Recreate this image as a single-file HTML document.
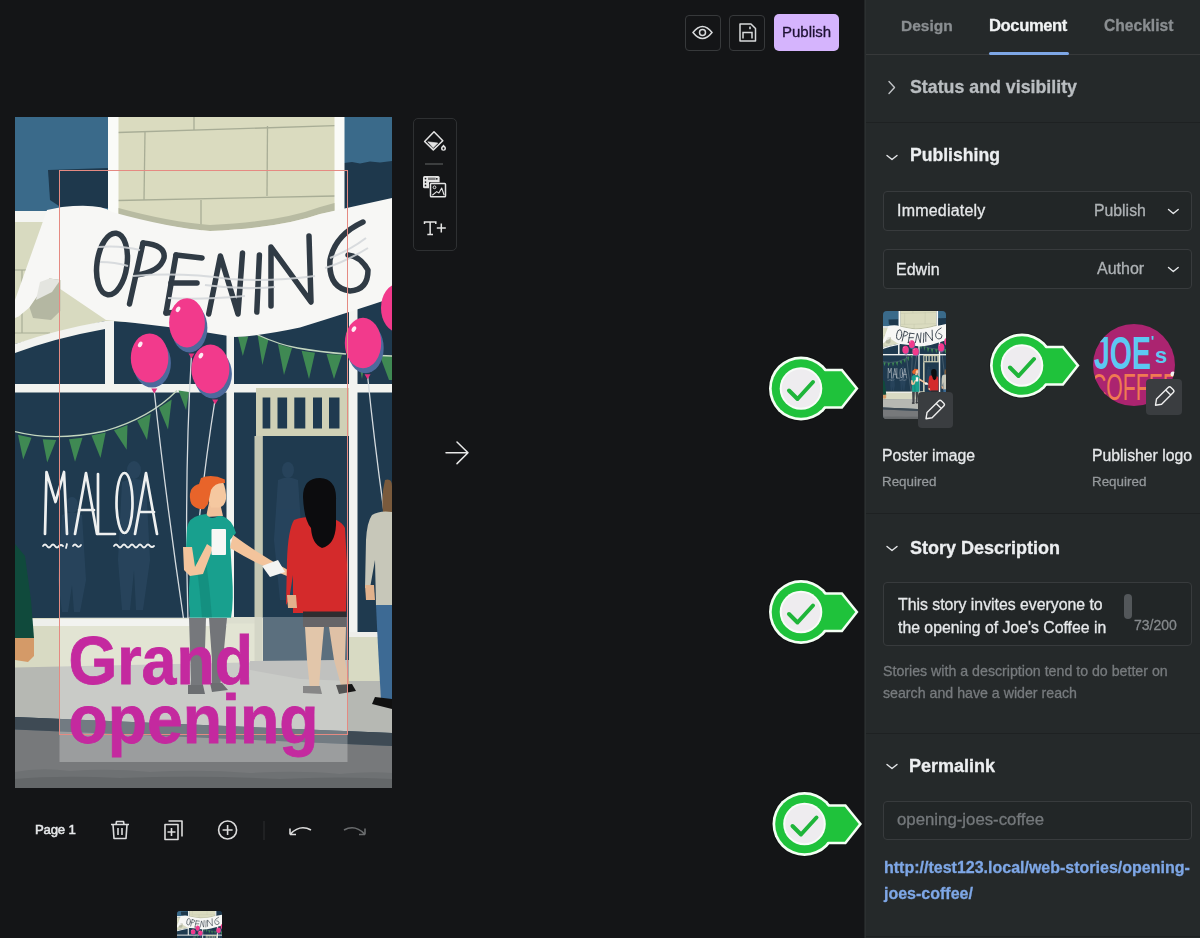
<!DOCTYPE html>
<html><head><meta charset="utf-8">
<style>
*{box-sizing:border-box;margin:0;padding:0}
html,body{width:1200px;height:938px;overflow:hidden;background:#141517;font-family:"Liberation Sans",sans-serif;}
.abs{position:absolute}
#panel{position:absolute;left:865px;top:0;width:335px;height:938px;background:#25292a;border-left:1px solid #2c3031;box-shadow:-1px 0 0 #222526}
.t{position:absolute;white-space:nowrap;line-height:1;will-change:transform;-webkit-text-stroke:0.3px currentColor}
.div{position:absolute;left:0;width:335px;height:1px;background:#1e2122}
.sel{position:absolute;left:17px;width:309px;border:1px solid #383b3d;border-radius:4px;background:#222627}
.btn{position:absolute;border:1px solid #37393b;border-radius:4px}
.edit{position:absolute;width:36px;height:36px;background:#3a3d40;border-radius:4px}
</style></head><body>

<!-- top buttons -->
<div class="btn" style="left:685px;top:15px;width:36px;height:36px"></div>
<div class="btn" style="left:729px;top:15px;width:36px;height:36px"></div>
<div class="abs" style="left:774px;top:14px;width:65px;height:37px;background:#d5b4fd;border-radius:5px"></div>
<div class="t" style="left:782px;top:24px;font-size:15px;color:#1e1233">Publish</div>

<!-- canvas -->
<!--ILLUS--><svg style="position:absolute;left:15px;top:117px" width="377" height="671" viewBox="15 117 377 671">
<g id="illbg">
<!-- base dark window -->
<rect x="15" y="117" width="377" height="671" fill="#1f3a4f"/>
<!-- sky -->
<rect x="15" y="117" width="93" height="95" fill="#3a6a8a"/>
<rect x="344" y="117" width="48" height="47" fill="#3a6a8a"/>
<path d="M48 170 L108 168 L108 208 L62 208 L50 200 Z" fill="#1e384c"/>
<path d="M344 163 L352 162 L360 163.5 L370 161.5 L380 162.5 L392 161 L392 203 L344 203 Z" fill="#1e384c"/>
<!-- cream wall -->
<rect x="118" y="117" width="217" height="120" fill="#dadbbf"/>
<g stroke="#a8ad96" stroke-width="1.3" fill="none">
<path d="M118 132.5 L335 125.7"/><path d="M118 200.5 L335 196"/>
<path d="M145 132 L144 200"/><path d="M267.5 126 L267 196"/><path d="M194 117 L194 130"/><path d="M201 200 L201 235"/>
</g>
<!-- pillars -->
<rect x="108" y="117" width="10.5" height="100" fill="#fafbf8"/>
<rect x="334.5" y="117" width="10" height="100" fill="#fafbf8"/>
<!-- left wall under banner -->
<path d="M15 222 L135 222 L135 322 L105 321 L15 344Z" fill="#d8dac0"/>
<g stroke="#a8ad96" stroke-width="1.2" fill="none"><path d="M15 270 L40 270"/><path d="M15 333 L50 333"/><path d="M22 270 L22 333"/></g>
<rect x="15" y="211" width="93" height="11" fill="#f4f5f2"/>
<!-- white arc frame over windows -->
<path d="M15 344 Q55 330 105 321 L114 321 L114 329 L105 329 Q55 338 15 353 Z" fill="#f2f3f0"/>
<!-- mullions / beams -->
<rect x="105" y="322" width="9" height="66" fill="#f2f3f0"/>
<rect x="226.5" y="318" width="7.5" height="306" fill="#f2f3f0"/>
<rect x="349" y="300" width="8.5" height="337" fill="#f2f3f0"/>
<rect x="15" y="384" width="377" height="8.5" fill="#f2f3f0"/>
<!-- bunting strings & flags -->
<g fill="#3f8953">
<path d="M18 434.7 L31.5 437.7 L23.2 459.5Z"/><path d="M42.7 439.2 L56.2 440 L47.2 462.5Z"/><path d="M69 439.2 L82.5 437.7 L75 461.7Z"/><path d="M91.5 435.5 L105.7 432.5 L100.5 458Z"/><path d="M114 430.2 L127.5 425 L126.7 449.7Z"/><path d="M137.2 420.5 L150.7 413.7 L147 440Z"/><path d="M159 407.7 L171.7 399.5 L168 429.5Z"/><path d="M178.5 390.5 L189 392 L186 410Z"/>
<path d="M238 336.6 L248.2 336.6 L242.8 356Z"/><path d="M257.7 335.2 L268.5 339.3 L262.4 365Z"/><path d="M278 344 L292 348 L284 375Z"/><path d="M301.6 350.8 L315 352.8 L309 379Z"/><path d="M326.5 354 L342 354.8 L334 379Z"/>
<path d="M357 355 L366 355 L362 379Z"/><path d="M380 356 L392 356 L392 380 L389 380Z"/>
</g>
<g stroke="#c3d6bf" stroke-width="1.3" fill="none">
<path d="M15 431.7 Q55 442 105 431 Q150 418 177 390.5"/>
<path d="M256.8 334.5 Q280 345 297.5 348 Q320 352 346 354"/>
<path d="M357 354.5 L392 356"/>
</g>
<!-- door railing -->
<rect x="256" y="388" width="93" height="48" fill="#cfd0b6"/>
<g fill="#1f3a50"><rect x="262.6" y="397.5" width="7.7" height="31"/><rect x="277.5" y="397.5" width="9.6" height="31"/><rect x="294.3" y="397.5" width="11" height="31"/><rect x="313" y="397.5" width="9" height="31"/><rect x="329" y="397.5" width="10.5" height="31"/></g>
<rect x="256" y="436" width="6.6" height="224" fill="#cfd0b6"/>
<!-- banner -->
<path d="M118.5 208 Q170 222 210 225 Q280 222 320 207 L334.5 203 L334.5 211 L320 214 Q280 228 210 231 Q170 228 118.5 215Z" fill="#b8bba2"/>
<path d="M47 210 L62 207 Q100 203 112 212 Q170 228 210 231 Q280 228 320 214 Q360 205 392 198 L392 298 Q350 312 300 327.5 Q260 336 235 337 Q170 326 106 320 L60.3 289 L60.3 280 L49.4 278.4 L29.5 307.4 L18.6 316.4 L15 318 L15 300 Z" fill="#f7f7f5"/>
<path d="M49.4 278.4 L60.3 280 L60.3 311 L51 320 L33 318 L29.5 307.4Z" fill="#b4b7a2"/><path d="M40 282 L49.4 278.4 L60.3 280 L52 292 L36 300Z" fill="#e4e5e0"/>
<g stroke="#303b45" stroke-width="5.5" fill="none" stroke-linecap="round" stroke-linejoin="round">
<ellipse cx="112" cy="264" rx="15" ry="31" transform="rotate(8 112 264)"/>
<path d="M143 243 L129.5 304"/><path d="M143 243 Q166 245 164 258 Q160 272 136 275"/>
<path d="M176 255 L166 313"/><path d="M176 255 L202 258"/><path d="M171 283 L197 283"/><path d="M166 313 L194 311"/>
<path d="M208.7 314 L220.4 256 L238 314 L242.5 253"/>
<path d="M259.4 255 L256.8 312"/>
<path d="M271 306 L271 247 L311 302 L309 236"/>
<path d="M363 222 Q335 235 330 260 Q328 288 350 291 Q368 290 368 270 Q360 256 348 255"/>
</g>
<g stroke="#d3d7da" stroke-width="2" fill="none" opacity="0.85">
<path d="M98 247 Q120 245 140 250"/><path d="M100 262 Q115 262 128 266"/>
<path d="M133 276 Q180 272 230 279 Q270 282 315 276"/>
<path d="M205 285 Q240 290 275 287"/>
<path d="M168 298 Q200 300 245 296"/>
<path d="M325 268 Q345 262 368 248"/><path d="M330 258 Q350 250 366 238"/>
</g>
<!-- balloon strings -->
<g stroke="#d5dbdf" stroke-width="1.3" fill="none">
<path d="M154 389 Q166 500 184 622"/><path d="M191.5 354 Q184 480 188 622"/><path d="M215 400 Q199 500 190 622"/><path d="M367.5 375 Q374 440 384 512"/>
</g>
<!-- balloons -->
<g>
<ellipse cx="189.5" cy="327.8" rx="17.9" ry="24.6" fill="#4d6a9c"/><ellipse cx="187" cy="322.8" rx="17.9" ry="24.6" fill="#f23a8c"/><path d="M188.475 353.40000000000003 L194.475 353.40000000000003 L191.475 358.40000000000003Z" fill="#e0307e"/><ellipse cx="178.05" cy="309.27" rx="2" ry="3" transform="rotate(30 178.05 309.27)" fill="#ffffff" opacity="0.9"/>
<ellipse cx="152.1" cy="363" rx="18.8" ry="24.6" fill="#4d6a9c"/><ellipse cx="149.6" cy="358" rx="18.8" ry="24.6" fill="#f23a8c"/><path d="M151.29999999999998 388.6 L157.29999999999998 388.6 L154.29999999999998 393.6Z" fill="#e0307e"/><ellipse cx="140.2" cy="344.47" rx="2" ry="3" transform="rotate(30 140.2 344.47)" fill="#ffffff" opacity="0.9"/>
<ellipse cx="212.9" cy="374" rx="19" ry="24.4" fill="#4d6a9c"/><ellipse cx="210.4" cy="369" rx="19" ry="24.4" fill="#f23a8c"/><path d="M212.15 399.4 L218.15 399.4 L215.15 404.4Z" fill="#e0307e"/><ellipse cx="200.9" cy="355.58" rx="2" ry="3" transform="rotate(30 200.9 355.58)" fill="#ffffff" opacity="0.9"/>
<ellipse cx="365.5" cy="348" rx="18.2" ry="25.3" fill="#4d6a9c"/><ellipse cx="363" cy="343" rx="18.2" ry="25.3" fill="#f23a8c"/><path d="M364.55 374.3 L370.55 374.3 L367.55 379.3Z" fill="#e0307e"/><ellipse cx="353.9" cy="329.085" rx="2" ry="3" transform="rotate(30 353.9 329.085)" fill="#ffffff" opacity="0.9"/>
<ellipse cx="398" cy="308" rx="17" ry="24" fill="#f23a8c"/>
</g>
<!-- ghosts -->
<g fill="#2a4760" opacity="0.75">
<ellipse cx="134" cy="470" rx="7" ry="9"/><path d="M122 482 Q134 476 146 482 L150 560 L143 610 L136 610 L134 570 L130 610 L122 610 L118 560Z"/>
<ellipse cx="72" cy="505" rx="6" ry="8"/><path d="M62 515 Q72 510 82 515 L86 580 L80 612 L74 612 L72 585 L68 612 L62 612 L58 580Z"/>
<ellipse cx="288" cy="470" rx="6" ry="8"/><path d="M278 480 Q288 475 298 480 L302 540 L296 600 L280 600 L274 540Z"/>
</g>
<!-- MALOA -->
<g stroke="#eef0f0" stroke-width="2.7" fill="none" stroke-linecap="round" stroke-linejoin="round">
<path d="M45 534 L46.5 472 L55.5 502 L64 472 L67 534"/>
<path d="M75 534 L86 473 L97 534 M79 510 L94 510"/>
<path d="M98 474 L98 534 L115 534"/>
<ellipse cx="124.5" cy="503" rx="8" ry="30"/>
<path d="M135 534 L146 473 L157 534 M139 512 L154 512"/>
<path d="M43 546 q2 -3 4 0 q2 3 4 0 q2 -3 4 0 q2 3 4 0 q2 -2 4 0 M66 548 l1 -4 M73 546 q2 -3 4 0 q2 2 4 -1 M114 546 q2 -3 4 0 q2 3 4 0 q2 -3 4 0 q2 3 4 0 q2 -3 4 0 q2 3 4 0 q2 -3 4 0 q2 3 4 0 q2 -3 4 0 q2 2 4 0" stroke-width="1.8"/>
</g>
<!-- window bottom sill and base wall -->
<rect x="15" y="618" width="248" height="50" fill="#d8dac3"/>
<rect x="15" y="619" width="212" height="7" fill="#eeefeb"/>
<path d="M226 617 L255 617 L255 623.5 L226 623.5Z" fill="#d0d2bd"/>
<!-- door -->
<rect x="254.5" y="436" width="8" height="226" fill="#c5c7b3"/>
<rect x="349" y="632" width="43" height="49" fill="#d8dac3"/>
<rect x="349" y="632" width="32" height="5" fill="#eeeeea"/>
<!-- left person green -->
<path d="M15 544 L25 556 L31 600 L34 638 L15 640 Z" fill="#104a3c"/>
<path d="M15 638 L34 638 L34 656 L28 662 L15 660Z" fill="#d49a68"/>
<!-- sidewalk -->
<path d="M15 667.5 L263 662 L349 660 L349 681 L392 681 L392 733 L15 717 Z" fill="#b6b8b3"/>
<path d="M250 661 L349 660 L349 681 L300 679 L250 670Z" fill="#a9aba8"/>
<path d="M15 717 L392 733 L392 746 L15 729.5 Z" fill="#3e4a54"/>
<path d="M15 729.5 L392 746 L392 788 L15 788 Z" fill="#77797b"/>
<path d="M15 772 Q40 767 70 771 Q110 768 150 772 Q200 769 250 773 Q300 770 340 774 Q370 771 392 773 L392 788 L15 788Z" fill="#6e7173"/>
<path d="M15 779 Q60 775 120 778 Q200 775 280 779 Q340 776 392 779 L392 788 L15 788Z" fill="#646769"/>
<!-- woman 1 -->
<path d="M189 618 L206 618 L204 680 L201 692 L190 692 L191 680 Z" fill="#44474c"/>
<path d="M209 618 L227 618 L223 660 L220 688 L212 690 L212 660 Z" fill="#404348"/>
<path d="M188 685 L203 685 L205 694 L188 694Z M210 683 L222 683 L228 690 L212 692Z" fill="#36393d"/>
<path d="M209 503 L220 503 L223 516 L206 517Z" fill="#f0c09a"/>
<path d="M187 528 Q188 518 200 515 L206 514 Q211 521 218 516 L222 516 Q232 519 236 533 L230 540 L232 575 Q234 600 231 618 L190 618 Q187 590 192 555 L186 548 Z" fill="#18a08e"/>
<path d="M196 560 Q200 590 202 618 L212 618 Q210 590 206 560Z" fill="#128474" opacity="0.55"/>
<path d="M233 535 Q260 555 288 570 L287 576 Q258 565 230 548Z" fill="#f3c49c"/>
<path d="M183 547 L192 547 L195 567 L207 544 L213 548 L203 574 L190 576 L184 570Z" fill="#f3c49c"/>
<rect x="211.5" y="529" width="14.5" height="26" rx="1" fill="#f7f7f5"/>
<path d="M262 566 L278 560 L285 572 L270 577Z" fill="#f4f4f2"/>
<path d="M208 486 Q213 480 223 482 Q226.5 490 226 499 Q225 506 219 507.5 L211 507.5 Q207 500 208 486Z" fill="#f5c8a0"/>
<path d="M201 478 Q212 473.5 224.8 479.5 L225 483 Q215 482 211 490 L208 504 L204 509 Q196 510 191.5 504 Q188.5 497 191 490 Q194 485 199 484 Z" fill="#e8642a"/>
<!-- woman 2 -->
<path d="M294 520 Q304 516 322 517 Q340 518 345 528 L347 565 L346 613 L293 613 L293 575 L289 600 L286 605 L287 560 Q288 530 294 520Z" fill="#d42a2b"/>
<path d="M287 595 L296 595 L297 608 L288 608Z" fill="#e2b28c"/>
<path d="M303 497 Q303 478 320 478 Q337 479 336 500 L336 525 Q335 545 322 548 Q312 544 311 528 Q304 520 303 497Z" fill="#0c0c0e"/>
<rect x="303" y="611.5" width="43" height="15.5" fill="#2e2d30"/>
<path d="M305 627 L324 627 L321 660 L319 688 L310 689 L307 660 Z" fill="#d8b18b"/>
<path d="M329 627 L346 627 L345 660 L350 686 L342 689 L334 660 Z" fill="#d3ab86"/>
<path d="M303 686 L320 686 L322 694 L303 693Z" fill="#5b5b5b"/><path d="M336 685 L352 684 L356 691 L339 694Z" fill="#151515"/>
<!-- man -->
<path d="M385 480 Q392 478 392 486 L392 512 L383 512 Q381 495 385 480Z" fill="#7a5a3c"/>
<path d="M372 515 Q380 510 392 512 L392 606 L376 606 L375 560 L370 588 L365 588 L366 540 Q367 522 372 515Z" fill="#c7c7b9"/>
<path d="M365 585 L374 585 L375 600 L366 600Z" fill="#e2b28c"/>
<path d="M376 605 L392 605 L392 700 L381 700 Q378 650 376 605Z" fill="#3d6a94"/>
<path d="M375 697 L392 699 L392 709 L372 704Z" fill="#101010"/>
</g>
<!-- text overlay -->
<rect x="59.5" y="617" width="288" height="145" fill="#ffffff" opacity="0.27"/>
<rect x="59.5" y="170.5" width="288" height="564" fill="none" stroke="#e58a82" stroke-width="1"/>
<text x="68.5" y="683.5" font-family="Liberation Sans" font-weight="700" font-size="68.5" fill="#c4299f" stroke="#c4299f" stroke-width="0.8" textLength="184.5" lengthAdjust="spacingAndGlyphs">Grand</text>
<text x="68.5" y="742.5" font-family="Liberation Sans" font-weight="700" font-size="68" fill="#c4299f" stroke="#c4299f" stroke-width="0.8" textLength="250" lengthAdjust="spacingAndGlyphs">opening</text>
</svg>
<!--/ILLUS-->

<!-- page toolbar text -->
<div class="t" style="left:35px;top:823px;font-size:13.2px;font-weight:400;color:#e6e8ea;letter-spacing:-0.2px;-webkit-text-stroke:0.5px #e6e8ea">Page 1</div>
<!-- bottom thumbnail -->
<div class="abs" style="left:177px;top:911px;width:45px;height:40px;border-radius:3px;overflow:hidden"><svg style="position:absolute;left:0;top:-5px" width="45" height="72" viewBox="15 117 377 671" preserveAspectRatio="none"><use href="#illbg"/></svg></div>
<!-- floating toolbar -->
<div class="abs" style="left:413px;top:118px;width:44px;height:133px;border:1px solid #2e3032;border-radius:5px"></div>

<!-- right panel -->
<div id="panel">
  <div class="div" style="top:54px;background:#37393a"></div>
  <div class="t" style="left:35px;top:18px;font-size:15.5px;font-weight:700;color:#8a8e91">Design</div>
  <div class="t" style="left:123px;top:17.5px;font-size:16.6px;letter-spacing:-0.4px;font-weight:700;color:#f1f3f4">Document</div>
  <div class="t" style="left:238px;top:18px;font-size:15.6px;font-weight:700;color:#8a8e91">Checklist</div>
  <div class="abs" style="left:123px;top:52px;width:80px;height:3px;background:#7ea7e6;border-radius:2px"></div>

  <div class="t" style="left:44px;top:79px;font-size:17.8px;font-weight:700;color:#b9bdc0">Status and visibility</div>
  <div class="div" style="top:122px"></div>

  <div class="t" style="left:43.5px;top:147px;font-size:17.6px;font-weight:700;color:#eceef0">Publishing</div>
  <div class="sel" style="top:191px;height:40px"></div>
  <div class="t" style="left:31px;top:203px;font-size:16px;letter-spacing:0.2px;color:#e6e8ea">Immediately</div>
  <div class="t" style="left:228px;top:203px;font-size:15.8px;color:#aeb2b5">Publish</div>
  <div class="sel" style="top:249px;height:40px"></div>
  <div class="t" style="left:30px;top:262px;font-size:16px;color:#e6e8ea">Edwin</div>
  <div class="t" style="left:231px;top:261px;font-size:16px;color:#aeb2b5">Author</div>


  <div class="abs" style="left:17px;top:311px;width:63px;height:108px;border-radius:4px;overflow:hidden"><svg width="63" height="108" viewBox="15 117 377 671" preserveAspectRatio="none"><use href="#illbg"/></svg></div>
  <div class="edit" style="left:52px;top:392px;width:35px;height:36px"></div>
  <div class="abs" style="left:227px;top:324px;width:82px;height:82px;border-radius:50%;overflow:hidden;background:#ab2470">
    <svg width="82" height="82" viewBox="0 0 82 82">
      <text x="1" y="45" font-family="Liberation Sans" font-weight="700" font-size="47" fill="#5cc8f2" textLength="57" lengthAdjust="spacingAndGlyphs">JOE</text>
      <text x="58" y="22" font-family="Liberation Sans" font-weight="700" font-size="14" fill="#5cc8f2">'</text>
      <text x="62" y="39" font-family="Liberation Sans" font-weight="700" font-size="22" fill="#5cc8f2">s</text>
      <text x="-2" y="76" font-family="Liberation Sans" font-weight="400" font-size="36" fill="#f07a52" textLength="86" lengthAdjust="spacingAndGlyphs">COFFEE</text>
      <circle cx="80" cy="50" r="2.5" fill="#f2f2f2"/><circle cx="79" cy="58" r="2" fill="#f2f2f2"/>
    </svg>
  </div>
  <div class="edit" style="left:280px;top:379px;width:36px;height:35.5px"></div>
  <div class="t" style="left:16px;top:448px;font-size:15.8px;color:#e6e8ea">Poster image</div>
  <div class="t" style="left:16px;top:475px;font-size:13.4px;color:#94989b">Required</div>
  <div class="t" style="left:225.5px;top:448px;font-size:15.8px;color:#e6e8ea">Publisher logo</div>
  <div class="t" style="left:225.5px;top:475px;font-size:13.4px;color:#94989b">Required</div>
  <div class="div" style="top:513px"></div>

  <div class="t" style="left:44px;top:538.5px;font-size:18px;font-weight:700;color:#eceef0">Story Description</div>
  <div class="sel" style="top:582px;height:64px"></div>
  <div class="t" style="left:31.5px;font-size:15.8px;line-height:22.5px;color:#e6e8ea;top:594px">This story invites everyone to<br>the opening of Joe's Coffee in</div>
  <div class="abs" style="left:258px;top:594px;width:7.5px;height:25px;background:#53575a;border-radius:4px"></div>
  <div class="t" style="left:268px;top:618px;font-size:14px;color:#85898c">73/200</div>
  <div class="t" style="left:17px;top:660px;font-size:14.2px;line-height:22.4px;color:#777b7e">Stories with a description tend to do better on<br>search and have a wider reach</div>
  <div class="div" style="top:733px"></div>

  <div class="t" style="left:43px;top:757px;font-size:18px;font-weight:700;color:#eceef0">Permalink</div>
  <div class="sel" style="top:801px;height:39px"></div>
  <div class="t" style="left:30.5px;top:812px;font-size:16.8px;color:#74787b">opening-joes-coffee</div>
  <div class="t" style="left:18px;top:860px;font-size:16px;font-weight:700;line-height:26px;color:#7ea7e6;top:855px">http://test123.local/web-stories/opening-<br>joes-coffee/</div>
  <div class="div" style="top:936px"></div>
</div>

<!--OVER--><svg style="position:absolute;left:0;top:0" width="1200" height="938" viewBox="0 0 1200 938">
<defs>
<g id="badge">
<circle r="33" fill="#0a0a0a" opacity="0.35"/>
<circle r="32" fill="#f4fff4"/>
<path d="M18 -19.8 L41.5 -19.8 L57.5 0 L41.5 20.2 L18 20.2Z" fill="#f4fff4"/>
<circle r="29.3" fill="#1fc23b"/>
<path d="M18 -17.3 L40.3 -17.3 L54.3 0 L40.3 17.7 L18 17.7Z" fill="#1fc23b"/>
<circle r="21.3" fill="#f8fcf8"/>
<circle r="19.3" fill="#eeecef"/>
<path d="M-12 2 L-3.5 10.5 L12 -6.5" stroke="#1fb53a" stroke-width="4" fill="none" stroke-linecap="round" stroke-linejoin="round"/>
</g>
<g id="pencil">
<path d="M-12 0 L-7 -3.6 L9.5 -3.6 Q11.5 -3.6 11.5 -1.6 L11.5 1.6 Q11.5 3.6 9.5 3.6 L-7 3.6 Z M6 -3.6 L6 3.6" stroke="#eeeeee" stroke-width="1.4" fill="none" stroke-linejoin="round"/>
</g>
</defs>
<!-- eye -->
<path d="M693 32.5 Q702.5 20.5 712 32.5 Q702.5 44.5 693 32.5Z" stroke="#d8dadc" stroke-width="1.5" fill="none"/>
<circle cx="702.5" cy="32.5" r="3" stroke="#d8dadc" stroke-width="1.5" fill="none"/>
<!-- save -->
<path d="M740 24 L751 24 L755.5 28.5 L755.5 41 L740 41Z" stroke="#d8dadc" stroke-width="1.5" fill="none" stroke-linejoin="round"/>
<path d="M743 38.5 L743 32.5 L752 32.5 L752 38.5" stroke="#d8dadc" stroke-width="1.5" fill="none"/>
<rect x="749.2" y="26.6" width="1.6" height="2.6" fill="#d8dadc"/>
<!-- toolbar: fill -->
<path d="M434 131.8 L442.8 140.7 L433.3 149.9 L424.6 141.5Z" stroke="#e4e4e4" stroke-width="1.5" fill="none" stroke-linejoin="round"/>
<path d="M427.8 141.8 L437.8 143 L433.1 147.8Z" fill="#e4e4e4" stroke="#e4e4e4" stroke-width="0.6" stroke-linejoin="round"/>
<path d="M443.5 144.6 Q446 147 446 148.2 A2.5 2.5 0 0 1 441 148.2 Q441 147 443.5 144.6Z M443.5 147.3 A0.9 1.1 0 1 0 443.51 147.3Z" fill="#e4e4e4" fill-rule="evenodd"/>
<path d="M425 164 L443 164" stroke="#4a4c4e" stroke-width="1.5"/>
<!-- media -->
<rect x="423" y="176" width="16.6" height="12.3" rx="1.5" fill="#e4e4e4"/>
<circle cx="425.5" cy="178.6" r="0.85" fill="#151618"/><circle cx="425.5" cy="182.1" r="0.85" fill="#151618"/><circle cx="425.5" cy="185.4" r="0.85" fill="#151618"/>
<rect x="428" y="177.6" width="7.6" height="2.4" fill="#151618" opacity="0.5"/>
<circle cx="436.8" cy="178.8" r="0.9" fill="#151618"/>
<rect x="429" y="182.2" width="18" height="16" fill="#151618"/>
<rect x="430.5" y="183.6" width="15" height="13.2" rx="0.8" stroke="#e4e4e4" stroke-width="1.5" fill="none"/>
<circle cx="434.5" cy="187.3" r="1.4" stroke="#e4e4e4" stroke-width="1" fill="none"/>
<path d="M432.3 195.2 L436.7 191.6 L438.9 193 L441.7 188 L444.2 195.2" stroke="#e4e4e4" stroke-width="1.1" fill="none" stroke-linejoin="round"/>
<!-- T+ -->
<path d="M424.5 224 L424.5 222 L435.8 222 L435.8 224 M430.15 222 L430.15 234.5 M427.3 234.5 L433 234.5" stroke="#e4e4e4" stroke-width="1.5" fill="none"/>
<path d="M436.8 228 L445.8 228 M441.3 223.5 L441.3 232.5" stroke="#e4e4e4" stroke-width="1.5" fill="none"/>
<!-- arrow -->
<path d="M446 452.8 L468 452.8 M457 442 L468 452.8 L457 463.6" stroke="#e8e8e8" stroke-width="1.5" fill="none" stroke-linecap="round" stroke-linejoin="round"/>
<!-- page toolbar -->
<g stroke="#dcdcdc" stroke-width="1.6" fill="none" stroke-linejoin="round">
<path d="M111 824.5 L129 824.5 M116 824.5 L116.5 821.5 L123.5 821.5 L124 824.5 M113 824.5 L114 838.5 L126 838.5 L127 824.5 M118 828 L118 835 M122 828 L122 835"/>
<path d="M165 824.5 L178 824.5 L178 839.5 L165 839.5Z M168.5 821 L182 821 L182 836.5 M171.5 828 L171.5 836 M167.5 832 L175.5 832"/>
<circle cx="227.6" cy="830" r="9"/>
<path d="M227.6 825 L227.6 835 M222.6 830 L232.6 830"/>
<path d="M290 834.5 L296 834.5 M290 834.5 L290 828.5 M290.5 834 Q300 824 311 830"/>
</g>
<path d="M264 821 L264 840" stroke="#2c2e30" stroke-width="1"/>
<path d="M365 834.5 L359 834.5 M365 834.5 L365 828.5 M364.5 834 Q355 824 344 830" stroke="#6a6c6e" stroke-width="1.6" fill="none"/>
<!-- panel chevrons -->
<g stroke="#c0c3c6" stroke-width="1.4" fill="none" stroke-linecap="round" stroke-linejoin="round">
<path d="M889 81.5 L894.5 87.5 L889 93.5"/>
</g>
<g stroke="#e6e8ea" stroke-width="1.4" fill="none" stroke-linecap="round" stroke-linejoin="round">
<path d="M887 155.5 L892 159.5 L897 155.5"/>
<path d="M887 546.5 L892 550.5 L897 546.5"/>
<path d="M887 764.5 L892 768.5 L897 764.5"/>
<path d="M1168.5 209.5 L1173.3 213.5 L1178.2 209.5"/>
<path d="M1168.5 267.5 L1173.3 271.5 L1178.2 267.5"/>
</g>
<!-- pencils -->
<use href="#pencil" transform="translate(934.5 410.2) rotate(-45)"/>
<use href="#pencil" transform="translate(1164 396.7) rotate(-45)"/>
<!-- badges -->
<use href="#badge" x="801" y="388.5"/>
<use href="#badge" x="1022" y="365.5"/>
<use href="#badge" x="801" y="612"/>
<use href="#badge" x="804.5" y="824"/>
</svg>
<!--/OVER-->
</body></html>
